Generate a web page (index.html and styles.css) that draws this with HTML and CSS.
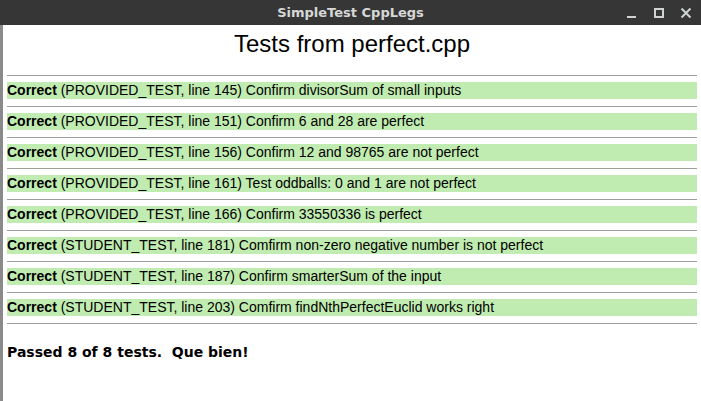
FILE: index.html
```html
<!DOCTYPE html>
<html>
<head>
<meta charset="utf-8">
<link rel="stylesheet" href="styles.css">
</head>
<body>
<div class="titlebar">
  <div class="tb-side"></div>
  <div class="tb-title">SimpleTest CppLegs</div>
  <div class="tb-side tb-controls">
    <svg class="ctl" width="12" height="12" viewBox="0 0 12 12"><rect x="1" y="9" width="9" height="2" fill="#cfd3d4"/></svg>
    <svg class="ctl" width="12" height="12" viewBox="0 0 12 12"><rect x="2" y="2" width="8" height="8" fill="none" stroke="#cfd3d4" stroke-width="2"/></svg>
    <svg class="ctl" width="12" height="12" viewBox="0 0 12 12"><path d="M1.5 1.5 L10.5 10.5 M10.5 1.5 L1.5 10.5" stroke="#cfd3d4" stroke-width="2"/></svg>
  </div>
</div>
<div class="main">
  <div class="edge"></div>
  <div class="content">
    <h1 class="heading">Tests from perfect.cpp</h1>
    <div class="results">
      <div class="row"><div class="bar"><b>Correct</b> (PROVIDED_TEST, line 145) Confirm divisorSum of small inputs</div></div>
      <div class="row"><div class="bar"><b>Correct</b> (PROVIDED_TEST, line 151) Confirm 6 and 28 are perfect</div></div>
      <div class="row"><div class="bar"><b>Correct</b> (PROVIDED_TEST, line 156) Confirm 12 and 98765 are not perfect</div></div>
      <div class="row"><div class="bar"><b>Correct</b> (PROVIDED_TEST, line 161) Test oddballs: 0 and 1 are not perfect</div></div>
      <div class="row"><div class="bar"><b>Correct</b> (PROVIDED_TEST, line 166) Confirm 33550336 is perfect</div></div>
      <div class="row"><div class="bar"><b>Correct</b> (STUDENT_TEST, line 181) Comfirm non-zero negative number is not perfect</div></div>
      <div class="row"><div class="bar"><b>Correct</b> (STUDENT_TEST, line 187) Confirm smarterSum of the input</div></div>
      <div class="row"><div class="bar"><b>Correct</b> (STUDENT_TEST, line 203) Comfirm findNthPerfectEuclid works right</div></div>
    </div>
    <p class="summary">Passed 8 of 8 tests.  Que bien!</p>
  </div>
</div>
</body>
</html>
```

FILE: styles.css
```css
html, body {
  margin: 0;
  padding: 0;
  width: 701px;
  height: 401px;
  overflow: hidden;
  background: #ffffff;
}
body {
  display: flex;
  flex-direction: column;
}
.titlebar {
  height: 25px;
  background: #363636;
  display: grid;
  grid-template-columns: 1fr auto 1fr;
  align-items: center;
  flex: none;
}
.tb-title {
  font-family: "DejaVu Sans", sans-serif;
  font-weight: bold;
  font-size: 13px;
  color: #d6d8d8;
  line-height: 25px;
  padding-top: 0px;
}
.tb-controls {
  display: flex;
  justify-content: flex-end;
  align-items: center;
  gap: 15px;
  padding-right: 9px;
}
.ctl {
  display: block;
}
.main {
  flex: 1;
  display: flex;
}
.edge {
  width: 3px;
  background: #8a8a8a;
  flex: none;
}
.content {
  flex: 1;
  background: #ffffff;
  padding: 5px 4px 0 4px;
}
.heading {
  margin: 0 0 17px 0;
  font-family: "Liberation Sans", Arial, sans-serif;
  font-weight: normal;
  font-size: 24px;
  line-height: 28px;
  text-align: center;
  color: #000;
}
.results {
  border-bottom: 1px solid #9e9e9e;
}
.row {
  border-top: 1px solid #9e9e9e;
  padding: 6px 0 7px 0;
}
.bar {
  background: #c1ecb1;
  height: 17px;
  font-family: "Liberation Sans", Arial, sans-serif;
  font-size: 14px;
  line-height: 17px;
  color: #000;
  white-space: nowrap;
}
.summary {
  margin: 20px 0 0 0;
  font-family: "DejaVu Sans", sans-serif;
  font-weight: bold;
  font-size: 14px;
  line-height: 17px;
  white-space: pre;
  color: #000;
}
```
